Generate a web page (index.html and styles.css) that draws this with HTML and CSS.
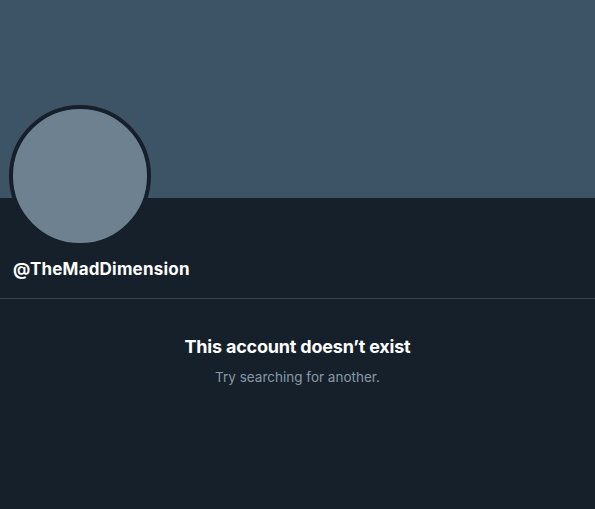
FILE: index.html
```html
<!DOCTYPE html>
<html>
<head>
<meta charset="utf-8">
<link rel="stylesheet" href="styles.css">
</head>
<body>
<div class="page">
  <div class="banner"></div>
  <div class="profile">
    <div class="avatar"></div>
    <div class="handle">@TheMadDimension</div>
  </div>
  <div class="divider"></div>
  <div class="empty">
    <div class="title">This account doesn’t exist</div>
    <div class="sub">Try searching for another.</div>
  </div>
</div>
</body>
</html>
```
FILE: styles.css
```css
html, body {
  margin: 0;
  padding: 0;
  background: #15202b;
}
.page {
  width: 595px;
  height: 509px;
  background: #15202b;
  font-family: Inter, "Noto Sans", "Liberation Sans", sans-serif;
  overflow: hidden;
}
.banner {
  height: 198px;
  background: #3d5466;
}
.profile {
  padding: 0 13px;
  display: flex;
  flex-direction: column;
}
.avatar {
  width: 134px;
  height: 134px;
  border-radius: 50%;
  background: #6e8191;
  border: 4px solid #15202b;
  margin-top: -93px;
  margin-left: -4px;
}
.handle {
  margin-top: 11px;
  color: #ffffff;
  font-weight: 700;
  font-size: 17px;
  line-height: 22px;
  letter-spacing: 0.2px;
}
.divider {
  margin-top: 18px;
  height: 1px;
  background: #38444d;
}
.empty {
  display: flex;
  flex-direction: column;
  align-items: center;
  padding-top: 36px;
}
.title {
  color: #ffffff;
  font-weight: 700;
  font-size: 18px;
  line-height: 24px;
  letter-spacing: -0.2px;
}
.sub {
  margin-top: 8px;
  color: #8899a6;
  font-size: 13.5px;
  line-height: 20px;
}
```
